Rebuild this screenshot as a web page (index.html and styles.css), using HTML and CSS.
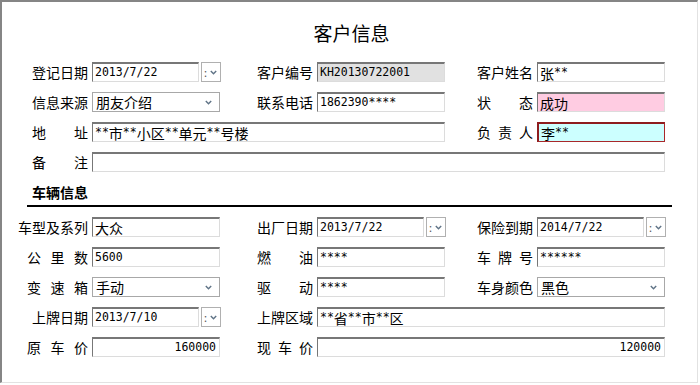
FILE: index.html
```html
<!DOCTYPE html>
<html lang="zh-CN">
<head>
  <meta charset="UTF-8" />
  <title>客户信息</title>
  <link rel="stylesheet" href="styles.css">
</head>
<body>
  <div class="frame">
    <h1 class="title">客户信息</h1>

    <div class="grid">
      <div class="cell c1"><span class="lbl">登记日期</span>
        <div class="date"><div class="box">2013/7/22</div><div class="btn"><span class="dots">:</span><svg width="7" height="5" viewBox="0 0 7 5"><polyline points="0.8,1 3.5,3.8 6.2,1" /></svg></div></div>
      </div>
      <div class="cell c2"><span class="lbl">客户编号</span><div class="box gray">KH20130722001</div></div>
      <div class="cell c3"><span class="lbl">客户姓名</span><div class="box"><span class="zh">张</span>**</div></div>

      <div class="cell c1"><span class="lbl">信息来源</span>
        <div class="sel"><span class="zh">朋友介绍</span><svg width="7" height="5" viewBox="0 0 7 5"><polyline points="0.8,1 3.5,3.8 6.2,1" /></svg></div>
      </div>
      <div class="cell c2"><span class="lbl">联系电话</span><div class="box">1862390****</div></div>
      <div class="cell c3"><span class="lbl"><span class="sp">状态</span></span><div class="box pink"><span class="zh">成功</span></div></div>

      <div class="cell c1 span2"><span class="lbl"><span class="sp">地址</span></span><div class="box">**<span class="zh">市</span>**<span class="zh">小区</span>**<span class="zh">单元</span>**<span class="zh">号楼</span></div></div>
      <div class="cell c3"><span class="lbl"><span class="sp">负责人</span></span><div class="box cyan"><span class="zh">李</span>**</div></div>

      <div class="cell c1 span3"><span class="lbl"><span class="sp">备注</span></span><div class="box"></div></div>
    </div>

    <div class="section">车辆信息</div>
    <div class="rule"></div>

    <div class="grid">
      <div class="cell c1"><span class="lbl">车型及系列</span><div class="box"><span class="zh">大众</span></div></div>
      <div class="cell c2"><span class="lbl">出厂日期</span>
        <div class="date"><div class="box">2013/7/22</div><div class="btn"><span class="dots">:</span><svg width="7" height="5" viewBox="0 0 7 5"><polyline points="0.8,1 3.5,3.8 6.2,1" /></svg></div></div>
      </div>
      <div class="cell c3"><span class="lbl">保险到期</span>
        <div class="date"><div class="box">2014/7/22</div><div class="btn"><span class="dots">:</span><svg width="7" height="5" viewBox="0 0 7 5"><polyline points="0.8,1 3.5,3.8 6.2,1" /></svg></div></div>
      </div>

      <div class="cell c1"><span class="lbl"><span class="sp w3">公里数</span></span><div class="box">5600</div></div>
      <div class="cell c2"><span class="lbl"><span class="sp">燃油</span></span><div class="box">****</div></div>
      <div class="cell c3"><span class="lbl"><span class="sp">车牌号</span></span><div class="box">******</div></div>

      <div class="cell c1"><span class="lbl"><span class="sp w3">变速箱</span></span>
        <div class="sel"><span class="zh">手动</span><svg width="7" height="5" viewBox="0 0 7 5"><polyline points="0.8,1 3.5,3.8 6.2,1" /></svg></div>
      </div>
      <div class="cell c2"><span class="lbl"><span class="sp">驱动</span></span><div class="box">****</div></div>
      <div class="cell c3"><span class="lbl">车身颜色</span>
        <div class="sel"><span class="zh">黑色</span><svg width="7" height="5" viewBox="0 0 7 5"><polyline points="0.8,1 3.5,3.8 6.2,1" /></svg></div>
      </div>

      <div class="cell c1"><span class="lbl">上牌日期</span>
        <div class="date"><div class="box">2013/7/10</div><div class="btn"><span class="dots">:</span><svg width="7" height="5" viewBox="0 0 7 5"><polyline points="0.8,1 3.5,3.8 6.2,1" /></svg></div></div>
      </div>
      <div class="cell c2 span2"><span class="lbl">上牌区域</span><div class="box">**<span class="zh">省</span>**<span class="zh">市</span>**<span class="zh">区</span></div></div>

      <div class="cell c1"><span class="lbl"><span class="sp w3">原车价</span></span><div class="box num">160000</div></div>
      <div class="cell c2 span2"><span class="lbl"><span class="sp">现车价</span></span><div class="box num">120000</div></div>
    </div>
  </div>
</body>
</html>
```

FILE: styles.css
```css
body {
  margin: 0;
  background: #fff;
  font-family: "Noto Sans CJK SC", sans-serif;
  font-size: 14px;
  color: #000;
}
.frame {
  width: 698px;
  height: 383px;
  box-sizing: border-box;
  border-top: 2px solid #858585;
  border-left: 2px solid #858585;
  border-right: 1px solid #e2e2e2;
  border-bottom: 1px solid #e2e2e2;
}
.title {
  margin: 0;
  height: 60px;
  display: flex;
  align-items: center;
  justify-content: center;
  font-size: 19px;
  font-weight: normal;
  padding-left: 4px;
}
.grid {
  display: grid;
  grid-template-columns: 218px 225px 220px;
  grid-auto-rows: 20px;
  row-gap: 10px;
}
.cell {
  display: grid;
  column-gap: 4px;
  align-items: center;
}
.c1 { grid-template-columns: 86px 1fr; }
.c2 { grid-template-columns: 93px 1fr; }
.c3 { grid-template-columns: 88px 1fr; }
.span2 { grid-column: span 2; }
.span3 { grid-column: span 3; }
.lbl {
  text-align: right;
  white-space: nowrap;
  line-height: 20px;
}
.sp {
  display: inline-block;
  width: 56px;
  text-align: justify;
  text-align-last: justify;
}
.sp.w3 { width: 61px; }

.box, .sel {
  height: 20px;
  box-sizing: border-box;
  display: flex;
  align-items: center;
  font-family: "DejaVu Sans Mono", monospace;
  font-size: 11.5px;
  line-height: 1;
  white-space: nowrap;
  overflow: hidden;
  background: #fff;
}
.box {
  border-top: 2px solid #777;
  border-left: 1px solid #777;
  border-right: 1px solid #dcdcdc;
  border-bottom: 1px solid #dcdcdc;
  padding-left: 2px;
}
.zh {
  font-family: "Noto Sans CJK SC", sans-serif;
  font-size: 14px;
}
.gray { background: #e1e1e1; }
.pink { background: #ffcce2; }
.cyan {
  background: #ccffff;
  border: 1px solid #a8282a;
  border-top: 2px solid #8e1c1e;
  border-left: 2px solid #8e1c1e;
}
.num {
  justify-content: flex-end;
  padding-right: 3px;
}
.sel {
  border: 1px solid #a8a8a8;
  padding-left: 3px;
  padding-right: 7px;
  justify-content: space-between;
}
.date {
  display: flex;
  gap: 2px;
  width: 129px;
}
.date .box {
  width: 107px;
  flex: none;
}
.btn {
  width: 20px;
  height: 20px;
  box-sizing: border-box;
  border: 1px solid #b0b0b0;
  display: flex;
  align-items: center;
  gap: 3px;
  padding-left: 2px;
  font-size: 11px;
  color: #555;
}
.dots { line-height: 1; }
svg polyline {
  fill: none;
  stroke: #5f7386;
  stroke-width: 1.4;
}
.section {
  margin-top: 10px;
  height: 20px;
  line-height: 20px;
  padding-left: 30px;
  font-weight: bold;
  font-size: 14px;
}
.rule {
  margin: 3px 0 10px 25px;
  width: 645px;
  height: 2px;
  background: #000;
}
```
